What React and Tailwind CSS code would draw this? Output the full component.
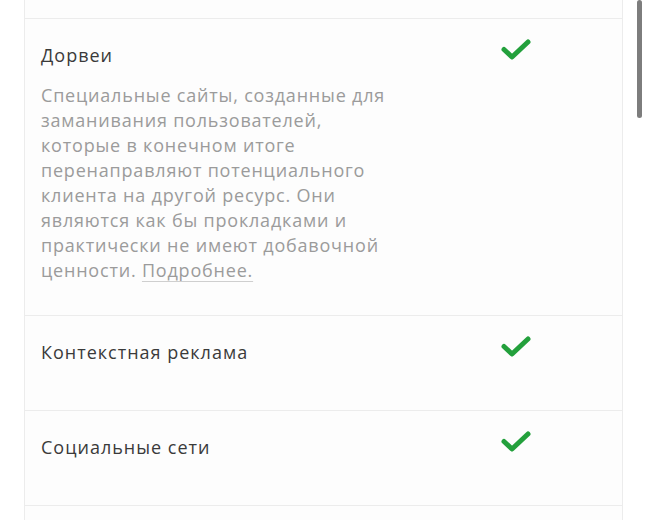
const rows = [
    {
        title: 'Дорвеи',
        text: 'Специальные сайты, созданные для заманивания пользователей, которые в конечном итоге перенаправляют потенциального клиента на другой ресурс. Они являются как бы прокладками и практически не имеют добавочной ценности.',
        link: 'Подробнее.',
    },
    { title: 'Контекстная реклама' },
    { title: 'Социальные сети' },
];

const CheckMark = () => (
    <svg width="30" height="22" viewBox="0 0 30 22" className="block">
        <path d="M3 10.5 L11 18 L27 3" fill="none" stroke="#23a03c" strokeWidth="5" strokeLinecap="round" strokeLinejoin="round" />
    </svg>
);

export default function App() {
    return (
        <div className="relative w-[647px] h-[520px] overflow-hidden bg-white" style={{ fontFamily: '"Open Sans", sans-serif' }}>
            <div className="ml-[24px] w-[599px] border-x border-[#ececec] bg-[#fdfdfd]">
                <div className="h-[19px] border-b border-[#ececec]" />
                {rows.map((r) => (
                    <div key={r.title} className="flex min-h-[95px] border-b border-[#ececec] pl-[16px] pt-[22px] pb-[32px]">
                        <div className="w-[352px] shrink-0">
                            <div className="text-[18px] leading-[28px] tracking-[1px] text-[#3a3a3a]">{r.title}</div>
                            {r.text && (
                                <p className="mt-[14px] text-[18px] leading-[25px] tracking-[0.8px] text-[#9b9b9b]">
                                    {r.text}{' '}
                                    <span className="underline decoration-[#cfcfcf] underline-offset-[4px]">{r.link}</span>
                                </p>
                            )}
                        </div>
                        <div className="ml-[108px] -mt-[2px]">
                            <CheckMark />
                        </div>
                    </div>
                ))}
                <div className="h-[40px]" />
            </div>
            <div className="absolute right-[5px] top-0 w-[5px] h-[118px] rounded-full bg-[#7d7d7d]" />
        </div>
    );
}
